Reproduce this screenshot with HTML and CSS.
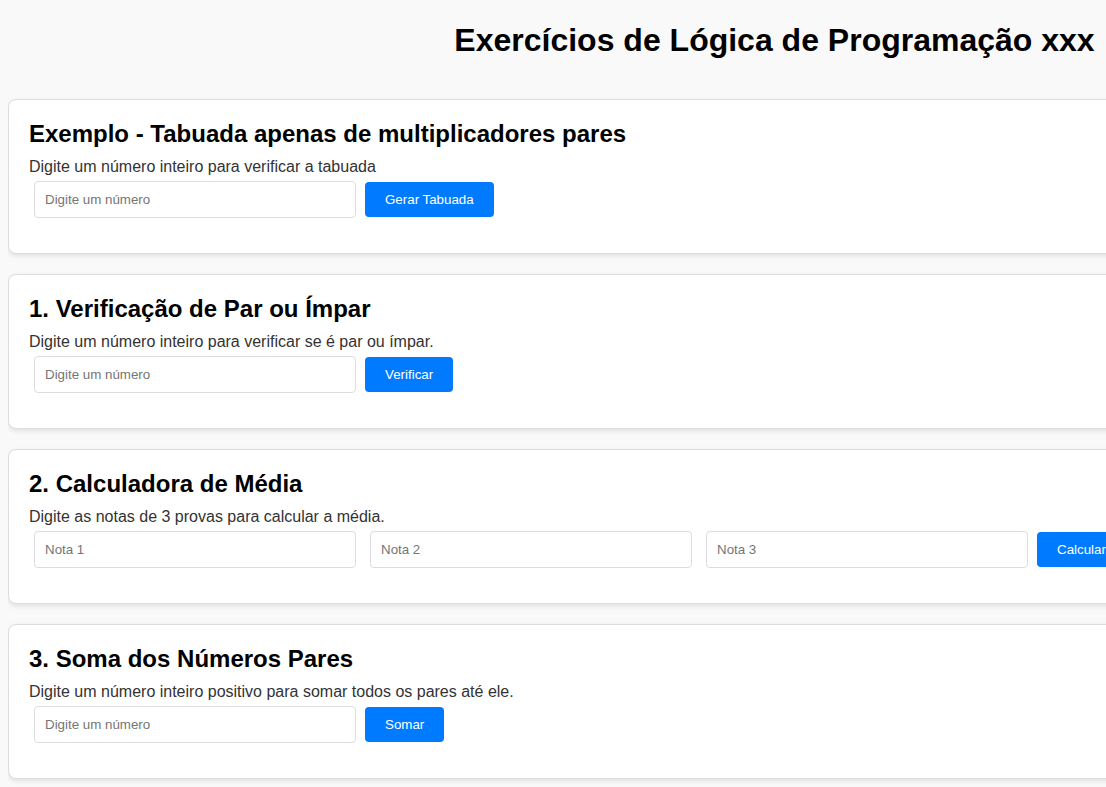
FILE: index.html
```html
<!DOCTYPE html>
<html lang="pt-BR">
<head>
  <meta charset="UTF-8">
  <meta name="viewport" content="width=device-width, initial-scale=1">
  <title>Exercícios de Lógica de Programação</title>
  <link rel="stylesheet" href="styles.css">
</head>
<body>
  <h1 class="page-title">Exercícios de Lógica de Programação xxx</h1>
  <main class="exercises">
    <section class="exercise">
      <h2 class="exercise-title">Exemplo - Tabuada apenas de multiplicadores pares</h2>
      <label class="exercise-text" for="tabuada">Digite um número inteiro para verificar a tabuada</label>
      <form class="exercise-form">
        <div class="fields">
          <input class="field" id="tabuada" type="number" placeholder="Digite um número">
        </div>
        <button class="action" type="button">Gerar Tabuada</button>
      </form>
    </section>
    <section class="exercise">
      <h2 class="exercise-title">1. Verificação de Par ou Ímpar</h2>
      <label class="exercise-text" for="paridade">Digite um número inteiro para verificar se é par ou ímpar.</label>
      <form class="exercise-form">
        <div class="fields">
          <input class="field" id="paridade" type="number" placeholder="Digite um número">
        </div>
        <button class="action" type="button">Verificar</button>
      </form>
    </section>
    <section class="exercise">
      <h2 class="exercise-title">2. Calculadora de Média</h2>
      <p class="exercise-text" id="media-texto">Digite as notas de 3 provas para calcular a média.</p>
      <form class="exercise-form" aria-labelledby="media-texto">
        <div class="fields">
          <input class="field" type="number" placeholder="Nota 1" aria-label="Nota 1">
          <input class="field" type="number" placeholder="Nota 2" aria-label="Nota 2">
          <input class="field" type="number" placeholder="Nota 3" aria-label="Nota 3">
        </div>
        <button class="action" type="button">Calcular</button>
      </form>
    </section>
    <section class="exercise">
      <h2 class="exercise-title">3. Soma dos Números Pares</h2>
      <label class="exercise-text" for="soma">Digite um número inteiro positivo para somar todos os pares até ele.</label>
      <form class="exercise-form">
        <div class="fields">
          <input class="field" id="soma" type="number" placeholder="Digite um número">
        </div>
        <button class="action" type="button">Somar</button>
      </form>
    </section>
  </main>
</body>
</html>
```

FILE: styles.css
```css
body {
  min-width: 1533px;
  margin: 8px;
  background: #f9f9f9;
  color: #000;
  font-family: Arial, "Liberation Sans", sans-serif;
  font-size: 16px;
}

.page-title {
  margin: 0;
  padding: 14px 0 41px;
  font-size: 32px;
  line-height: 36px;
  text-align: center;
}

.exercises {
  display: flex;
  flex-direction: column;
  gap: 20px;
  padding-bottom: 20px;
}

.exercise {
  padding: 20px 20px 35px;
  border: 1px solid #ddd;
  border-radius: 8px;
  background: #fff;
  box-shadow: 0 2px 5px rgba(0, 0, 0, 0.1);
}

.exercise-title {
  margin: 0 0 10px;
  font-size: 24px;
  line-height: 28px;
}

.exercise-text {
  display: block;
  margin: 0 0 5px;
  color: #333;
  line-height: 18px;
}

.exercise-form {
  display: flex;
  align-items: center;
  gap: 9px;
  margin: 0;
  padding-left: 5px;
}

.fields {
  display: flex;
  gap: 14px;
}

.field {
  box-sizing: border-box;
  width: 322px;
  height: 37px;
  margin: 0;
  padding: 10px;
  border: 1px solid #ddd;
  border-radius: 4px;
  background: #fff;
  font-family: Arial, "Liberation Sans", sans-serif;
}

.field::placeholder {
  color: #757575;
}

.action {
  margin: 0;
  padding: 10px 20px;
  border: 0;
  border-radius: 4px;
  background: #007bff;
  color: #fff;
  font-family: Arial, "Liberation Sans", sans-serif;
  line-height: 15px;
  cursor: pointer;
}

.action:hover {
  background: #0056b3;
}
```
